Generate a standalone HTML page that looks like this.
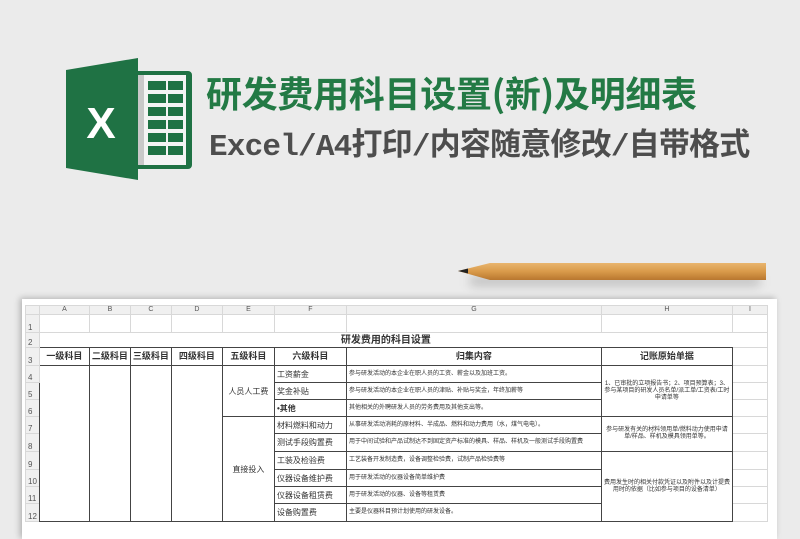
<!DOCTYPE html>
<html><head><meta charset="utf-8"><style>
*{margin:0;padding:0;box-sizing:border-box}
body{width:800px;height:526px;overflow:hidden;background:#ebebeb;position:relative;font-family:"Liberation Sans","Noto Sans CJK SC",sans-serif}
.abs{position:absolute}
.t1{left:206px;top:68px;font-size:36px;font-weight:bold;color:#237a45;white-space:nowrap;font-family:"Noto Sans CJK SC",sans-serif;line-height:48px;letter-spacing:-0.3px}
.t2{left:209px;top:126px;font-size:31px;color:#4d4d4d;white-space:nowrap;font-family:"Liberation Mono","Noto Sans CJK SC",monospace;line-height:44px;font-weight:bold;letter-spacing:-0.8px}
.paper{left:22px;top:299px;width:755px;height:240px;background:#fff;box-shadow:-2px -1px 6px rgba(0,0,0,.25)}
table{position:absolute;left:25px;top:305px;border-collapse:collapse;table-layout:fixed;font-size:8px;color:#333;font-family:"Liberation Sans","Noto Sans CJK SC",sans-serif;line-height:9px}
td{border:1px solid #d8d8d8;padding:0 2px;white-space:nowrap;overflow:hidden}
td.h{background:#f0f0f0;color:#555;text-align:center;font-size:7px;line-height:8px}
td.r{background:#f0f0f0;color:#555;text-align:left;font-size:8px;vertical-align:bottom}
td.b{border:1px solid #444}
.hd{font-weight:bold;text-align:center;font-size:9px}
.c{text-align:center}
.s{font-size:6px}
.w{white-space:normal;line-height:7px}
</style></head><body>
<svg class="abs" style="left:66px;top:58px" width="128" height="122" viewBox="0 0 128 122">
<rect x="60" y="13" width="66" height="98" rx="4" fill="#1f7244"/>
<rect x="64" y="17" width="56" height="90" fill="#f4f4f4"/>
<g fill="#1f7244">
<rect x="82" y="23" width="18" height="9"/><rect x="102" y="23" width="15" height="9"/>
<rect x="82" y="36" width="18" height="9"/><rect x="102" y="36" width="15" height="9"/>
<rect x="82" y="49" width="18" height="9"/><rect x="102" y="49" width="15" height="9"/>
<rect x="82" y="62" width="18" height="9"/><rect x="102" y="62" width="15" height="9"/>
<rect x="82" y="75" width="18" height="9"/><rect x="102" y="75" width="15" height="9"/>
<rect x="82" y="88" width="18" height="9"/><rect x="102" y="88" width="15" height="9"/>
</g>
<rect x="64" y="17" width="14" height="90" fill="#c9c9c9"/>
<polygon points="0,12 72,0 72,122 0,110" fill="#1f7244"/>
<text x="35" y="80" font-family="Liberation Sans" font-weight="bold" font-size="44" fill="#fff" text-anchor="middle">X</text>
</svg>
<div class="abs t1">研发费用科目设置(新)及明细表</div>
<div class="abs t2">Excel/A4打印/内容随意修改/自带格式</div>
<div class="abs" style="left:470px;top:276px;width:290px;height:10px;background:rgba(0,0,0,.18);filter:blur(5px)"></div>
<svg class="abs" style="left:455px;top:260px" width="315" height="24" viewBox="0 0 315 24">
<defs><linearGradient id="w" x1="0" y1="0" x2="0" y2="1"><stop offset="0" stop-color="#e9b56e"/><stop offset=".5" stop-color="#d99a4a"/><stop offset="1" stop-color="#b8772f"/></linearGradient></defs>
<polygon points="3,11 35,3 311,3 311,20 35,20" fill="url(#w)"/>
<polygon points="3,11 13,8.5 13,13.5" fill="#222"/>
</svg>
<div class="abs paper"></div>
<table>
<colgroup><col style="width:13px"><col style="width:50px"><col style="width:39px"><col style="width:40px"><col style="width:51px"><col style="width:52px"><col style="width:72px"><col style="width:255px"><col style="width:131px"><col style="width:35px"></colgroup>
<tr style="height:9px"><td class="h"></td><td class="h">A</td><td class="h">B</td><td class="h">C</td><td class="h">D</td><td class="h">E</td><td class="h">F</td><td class="h">G</td><td class="h">H</td><td class="h">I</td></tr>
<tr style="height:18px"><td class="r">1</td><td></td><td></td><td></td><td></td><td></td><td></td><td></td><td></td><td></td></tr>
<tr style="height:15px"><td class="r">2</td><td colspan="8" class="hd" style="font-size:10px;border-color:#fff #fff #444 #fff">研发费用的科目设置</td><td></td></tr>
<tr style="height:18px"><td class="r">3</td><td class="b hd">一级科目</td><td class="b hd">二级科目</td><td class="b hd">三级科目</td><td class="b hd">四级科目</td><td class="b hd">五级科目</td><td class="b hd">六级科目</td><td class="b hd">归集内容</td><td class="b hd">记账原始单据</td><td></td></tr>
<tr style="height:17px"><td class="r">4</td><td class="b" rowspan="9"></td><td class="b" rowspan="9"></td><td class="b" rowspan="9"></td><td class="b" rowspan="9"></td><td class="b c" rowspan="3">人员人工费</td><td class="b">工资薪金</td><td class="b s">参与研发活动的本企业在职人员的工资、薪金以及加班工资。</td><td class="b s c w" rowspan="3">1、已审批的立项报告书；2、项目预算表；3、参与某项目的研发人员名单/派工单/工资表/工时申请单等</td><td></td></tr>
<tr style="height:17px"><td class="r">5</td><td class="b">奖金补贴</td><td class="b s">参与研发活动的本企业在职人员的津贴、补贴与奖金，年终加薪等</td><td></td></tr>
<tr style="height:17px"><td class="r">6</td><td class="b" style="font-weight:bold">•其他</td><td class="b s">其他相关的外聘研发人员的劳务费用及其他支出等。</td><td></td></tr>
<tr style="height:17px"><td class="r">7</td><td class="b c" rowspan="6">直接投入</td><td class="b">材料燃料和动力</td><td class="b s">从事研发活动消耗的原材料、半成品、燃料和动力费用（水，煤气电电）。</td><td class="b s c w" rowspan="2">参与研发有关的材料领用单/燃料动力使用申请单/样品、样机及模具领用单等。</td><td></td></tr>
<tr style="height:18px"><td class="r">8</td><td class="b">测试手段购置费</td><td class="b s w">用于中间试验和产品试制达不到固定资产标准的模具、样品、样机及一般测试手段购置费</td><td></td></tr>
<tr style="height:18px"><td class="r">9</td><td class="b">工装及检验费</td><td class="b s">工艺装备开发制造费，设备调整检验费，试制产品检验费等</td><td class="b s c w" rowspan="4">费用发生时的相关付款凭证以及附件以及计提费用时的依据（比如参与项目的设备清单）</td><td></td></tr>
<tr style="height:17px"><td class="r">10</td><td class="b">仪器设备维护费</td><td class="b s">用于研发活动的仪器设备简单维护费</td><td></td></tr>
<tr style="height:17px"><td class="r">11</td><td class="b">仪器设备租赁费</td><td class="b s">用于研发活动的仪器、设备等租赁费</td><td></td></tr>
<tr style="height:18px"><td class="r">12</td><td class="b">设备购置费</td><td class="b s">主要是仪器科目预计划使用的研发设备。</td><td></td></tr>
</table>
</body></html>
